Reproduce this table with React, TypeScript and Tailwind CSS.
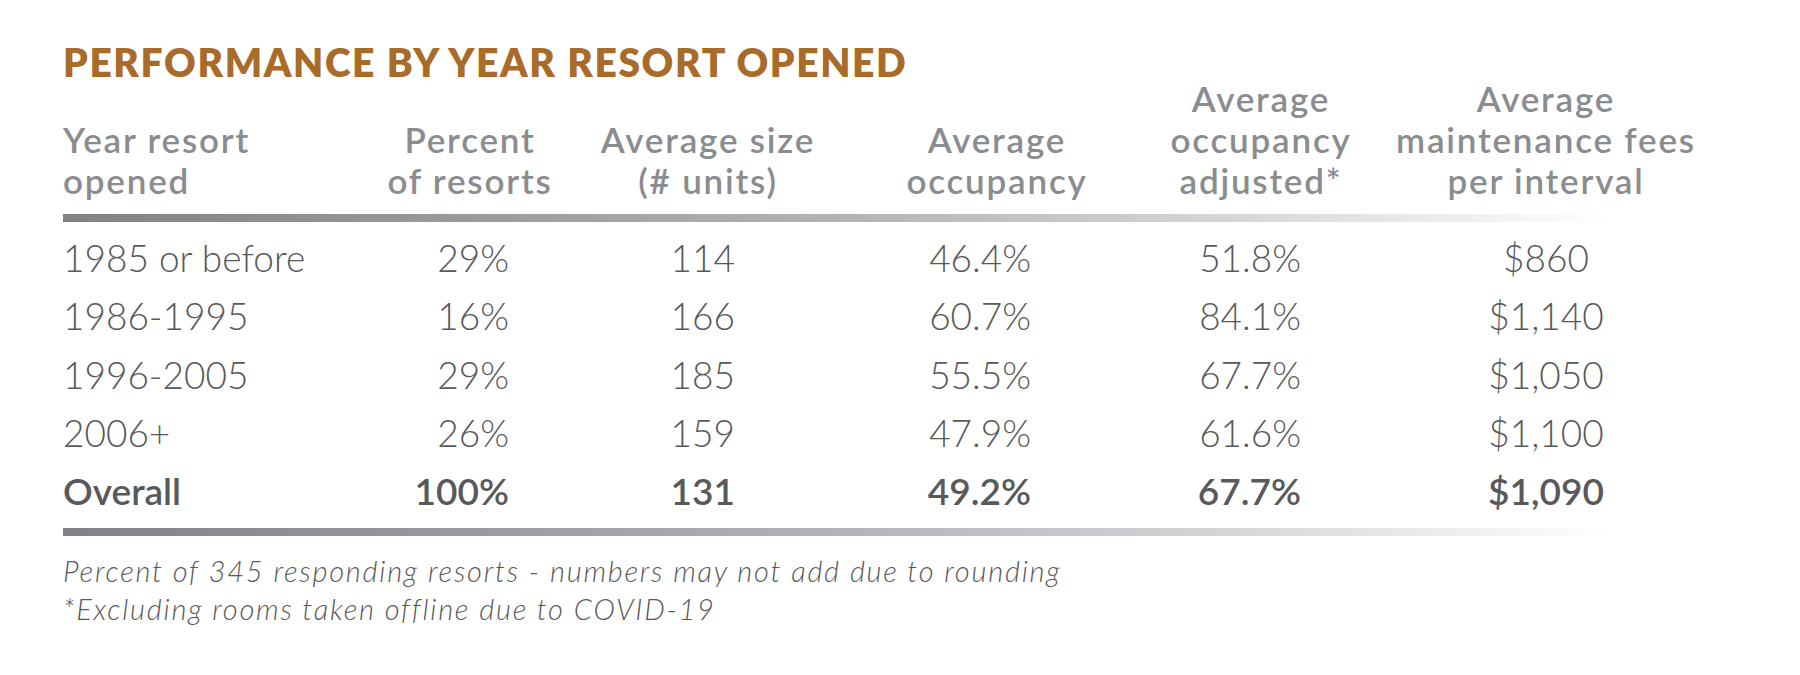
const headers: string[][] = [
  ['Year resort', 'opened'],
  ['Percent', 'of resorts'],
  ['Average size', '(# units)'],
  ['Average', 'occupancy'],
  ['Average', 'occupancy', 'adjusted*'],
  ['Average', 'maintenance fees', 'per interval'],
]

const rows: string[][] = [
  ['1985 or before', '29%', '114', '46.4%', '51.8%', '$860'],
  ['1986-1995', '16%', '166', '60.7%', '84.1%', '$1,140'],
  ['1996-2005', '29%', '185', '55.5%', '67.7%', '$1,050'],
  ['2006+', '26%', '159', '47.9%', '61.6%', '$1,100'],
  ['Overall', '100%', '131', '49.2%', '67.7%', '$1,090'],
]

// per-column cell classes for data values
const cellClass = [
  'text-left',
  'text-right pr-[80px]',
  'text-right pr-[92px]',
  'text-right pr-[136px]',
  'text-right pr-[54px]',
  'text-center',
]

const gridCols = 'grid grid-cols-[288px_238px_238px_340px_188px_382px]'

function Rule() {
  return (
    <div className="h-[8px] w-[1548px] bg-[linear-gradient(to_right,#808285,#97999c_25%,#b1b3b6_50%,#d4d5d7_75%,#ffffff)]" />
  )
}

export default function App() {
  return (
    <div className="w-[1800px] h-[675px] bg-white pl-[63px] pt-[44px] font-['Lato','Liberation_Sans',sans-serif]">
      <h1 className="text-[39px] leading-[36px] font-extrabold text-[#a96b29] tracking-[1.6px]">
        PERFORMANCE BY YEAR RESORT OPENED
      </h1>

      {/* Header */}
      <div className={`${gridCols} items-end mt-[-2px] text-[35px] leading-[41px] font-semibold tracking-[1.8px] text-[#8a8c8f]`}>
        {headers.map((lines, i) => (
          <div key={i} className={i === 0 ? 'flex flex-col items-start' : 'flex flex-col items-center'}>
            {lines.map((l) => (
              <span key={l} className="whitespace-nowrap">
                {l}
              </span>
            ))}
          </div>
        ))}
      </div>

      <div className="mt-[13px]">
        <Rule />
      </div>

      {/* Rows */}
      <div className="mt-[7px] mb-[8px]">
        {rows.map((r, ri) => (
          <div
            key={ri}
            className={`${gridCols} text-[37px] leading-[58.25px] text-[#58595b] ${ri === rows.length - 1 ? 'font-semibold' : 'font-light'}`}
          >
            {r.map((c, ci) => (
              <div key={ci} className={`whitespace-nowrap ${cellClass[ci]}`}>
                {c}
              </div>
            ))}
          </div>
        ))}
      </div>

      <Rule />

      {/* Footnotes */}
      <div className="mt-[16px] text-[29px] leading-[38px] tracking-[1.75px] italic font-light text-[#58595b]">
        <p>Percent of 345 responding resorts - numbers may not add due to rounding</p>
        <p>*Excluding rooms taken offline due to COVID-19</p>
      </div>
    </div>
  )
}
